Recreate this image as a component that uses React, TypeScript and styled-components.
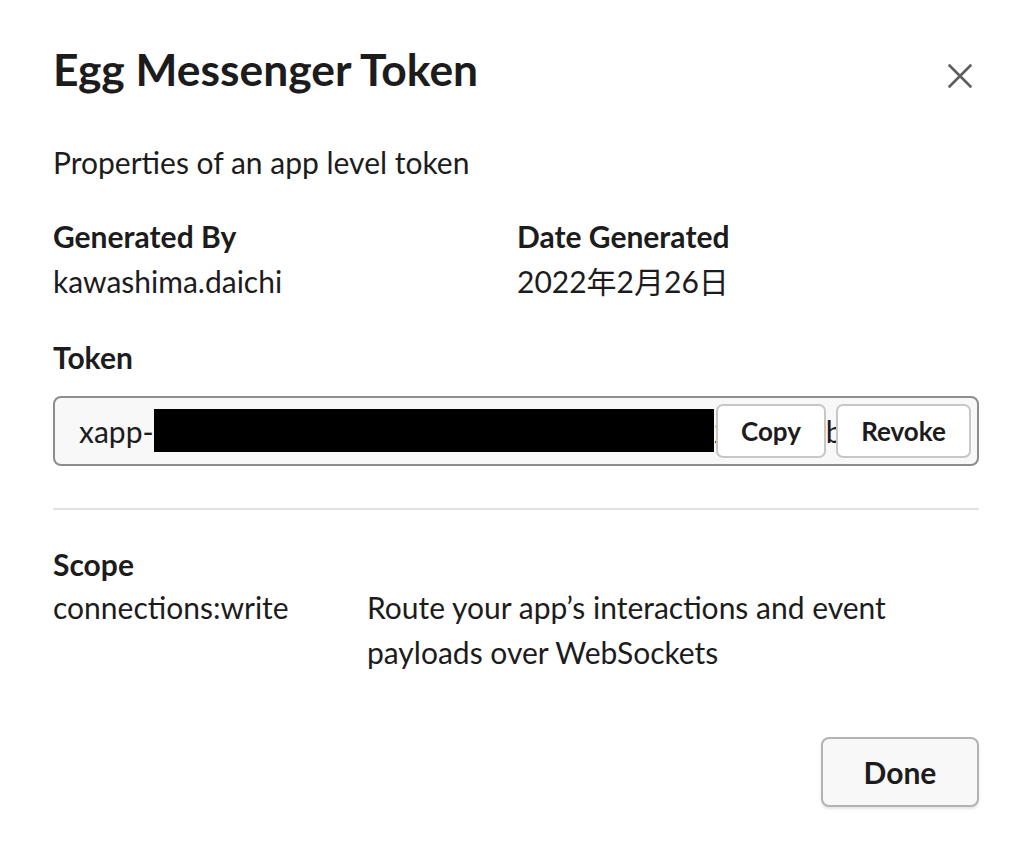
import styled, { createGlobalStyle } from "styled-components";

const GlobalStyle = createGlobalStyle`
  html, body {
    margin: 0;
    padding: 0;
    background: #ffffff;
  }
  body {
    font-family: Lato, "Noto Sans CJK JP", "Liberation Sans", sans-serif;
    color: #1d1c1d;
  }
`

const Modal = styled.div`
  width: 1026px;
  height: 850px;
  box-sizing: border-box;
  padding: 41px 47px 0 53px;
  display: flex;
  flex-direction: column;
`

const Header = styled.div`
  display: flex;
  justify-content: space-between;
  align-items: flex-start;
`

const Title = styled.h1`
  margin: 0;
  font-size: 44.4px;
  line-height: 56px;
  font-weight: 700;
`

const CloseButton = styled.button`
  margin: 19px 3px 0 0;
  padding: 0;
  width: 32px;
  height: 32px;
  border: none;
  background: transparent;
  display: flex;
  align-items: center;
  justify-content: center;
  color: #5e5d5e;
`

const Text = styled.p<{ $bold?: boolean }>`
  margin: 0;
  font-size: 30px;
  line-height: 45px;
  font-weight: ${p => (p.$bold ? 700 : 400)};
`

const Subtitle = styled(Text)`
  margin-top: 43px;
`

const InfoGrid = styled.div`
  margin-top: 29px;
  display: grid;
  grid-template-columns: 464px 1fr;
`

const Section = styled.div<{ $top: number }>`
  margin-top: ${p => p.$top}px;
  display: flex;
  flex-direction: column;
`

const TokenField = styled.div`
  position: relative;
  margin-top: 16px;
  height: 70px;
  box-sizing: border-box;
  border: 2px solid #8e8d8e;
  border-radius: 8px;
  background: #f8f8f8;
  padding: 0 0 0 24px;
  display: flex;
  align-items: center;
  overflow: hidden;
  white-space: nowrap;
  font-size: 30px;
`

const Redacted = styled.span`
  display: inline-block;
  width: 560px;
  height: 43px;
  margin-top: -2px;
  background: #000;
`

// the part of the token that sits under the Copy button
const Covered = styled.span`
  display: inline-block;
  width: 112px;
  overflow: hidden;
`

const TokenActions = styled.div`
  position: absolute;
  top: 6px;
  right: 6px;
  display: flex;
  gap: 10px;
`

const SmallButton = styled.button<{ $width: number }>`
  width: ${p => p.$width}px;
  height: 54px;
  box-sizing: border-box;
  border: 2px solid #c7c7c7;
  border-radius: 7px;
  background: #fff;
  font-family: inherit;
  font-size: 26px;
  font-weight: 700;
  color: #1d1c1d;
  padding: 0;
`

const Divider = styled.hr`
  margin: 42px 0 0;
  border: none;
  height: 2px;
  background: #e2e2e2;
`

const ScopeRow = styled.div`
  display: grid;
  grid-template-columns: 314px 1fr;
  margin-top: -2px;
`

const Footer = styled.div`
  margin-top: 62px;
  display: flex;
  justify-content: flex-end;
`

const DoneButton = styled.button`
  width: 158px;
  height: 70px;
  box-sizing: border-box;
  border: 2px solid #b3b3b3;
  border-radius: 8px;
  background: #f8f8f8;
  box-shadow: 0 2px 3px rgba(0, 0, 0, 0.1);
  font-family: inherit;
  font-size: 30px;
  font-weight: 700;
  color: #1d1c1d;
  padding: 0;
`

export default function App() {
  return (
    <>
      <GlobalStyle />
      <Modal>
        <Header>
          <Title>Egg Messenger Token</Title>
          <CloseButton aria-label="Close">
            <svg width="24" height="24" viewBox="0 0 24 24">
              <path d="M1.5 1.5 L22.5 22.5 M22.5 1.5 L1.5 22.5" stroke="currentColor" strokeWidth="2.6" strokeLinecap="round" />
            </svg>
          </CloseButton>
        </Header>
        <Subtitle>Properties of an app level token</Subtitle>
        <InfoGrid>
          <div>
            <Text $bold>Generated By</Text>
            <Text>kawashima.daichi</Text>
          </div>
          <div>
            <Text $bold>Date Generated</Text>
            <Text>2022年2月26日</Text>
          </div>
        </InfoGrid>
        <Section $top={31}>
          <Text $bold>Token</Text>
          <TokenField>
            xapp-<Redacted /><Covered>2490735186</Covered>b
            <TokenActions>
              <SmallButton $width={110}>Copy</SmallButton>
              <SmallButton $width={135}>Revoke</SmallButton>
            </TokenActions>
          </TokenField>
        </Section>
        <Divider />
        <Section $top={32}>
          <Text $bold>Scope</Text>
          <ScopeRow>
            <Text>connections:write</Text>
            <Text>Route your app’s interactions and event payloads over WebSockets</Text>
          </ScopeRow>
        </Section>
        <Footer>
          <DoneButton>Done</DoneButton>
        </Footer>
      </Modal>
    </>
  );
}
